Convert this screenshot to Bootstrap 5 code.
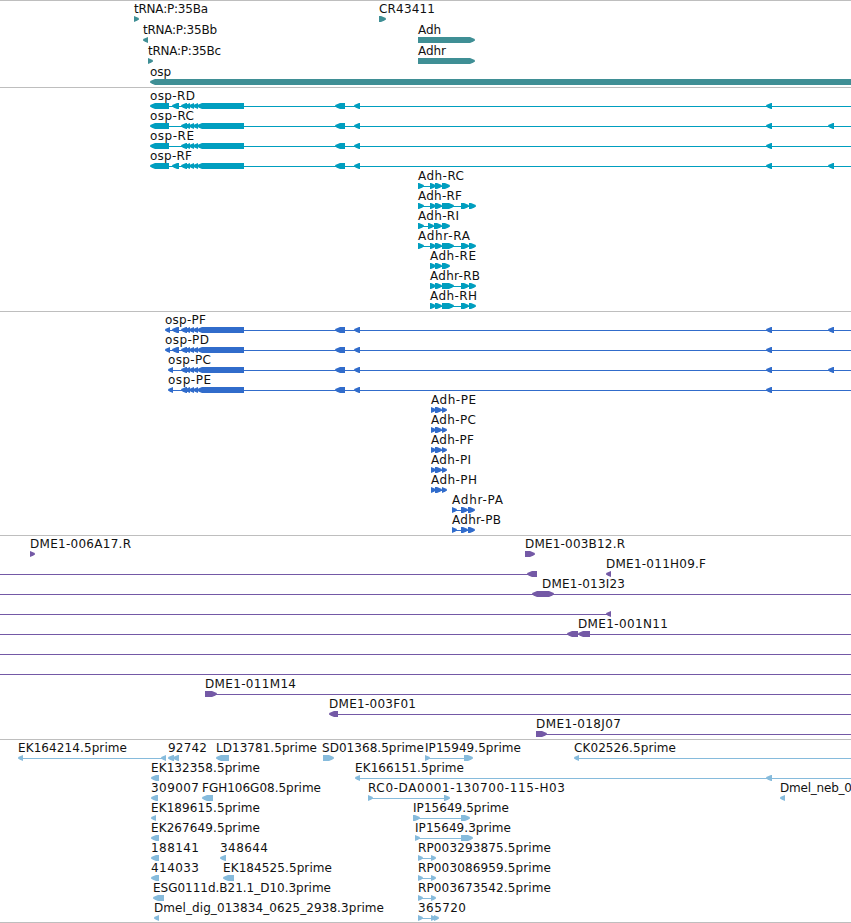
<!DOCTYPE html>
<html lang="en">
<head>
    <meta charset="UTF-8">
    <meta name="viewport" content="width=device-width, initial-scale=1">
    <title>Genome Tracks</title>
    <!-- Bootstrap CSS -->
    <link href="https://cdn.jsdelivr.net/npm/bootstrap@5.3.0/dist/css/bootstrap.min.css" rel="stylesheet">
    <style>
        .track { border-top: 1px solid #bebebe; }
        .track:last-child { border-bottom: 1px solid #bebebe; }
        .lane { width: 851px; height: 20px; overflow: visible; }
        .lane text { font: 12px "DejaVu Sans", sans-serif; fill: #111; }
        .track-gene { color: #3f8f95; padding-bottom: 2px; }
        .track-gene .lane { height: 21px; }
        .track-mrna { color: #009ebf; padding-bottom: 3px; }
        .track-cds { color: #316ccb; padding-bottom: 3px; }
        .track-bac { color: #7459a6; padding-bottom: 3px; }
        .track-est { color: #86bbdc; padding-bottom: 2px; }
    </style>
</head>
<body class="bg-white overflow-hidden">

    <main id="browser" class="d-flex flex-column"></main>

    <!-- Bootstrap JS -->
    <script src="https://cdn.jsdelivr.net/npm/bootstrap@5.3.0/dist/js/bootstrap.bundle.min.js"></script>

    <script>
        // labels: [text, start, end]
        // blocks: [start, end, direction], direction is L, R or B (both ends)
        // lines: [start, end]
        function lane(labels, blocks, lines) {
            return { labels: labels, blocks: blocks, lines: lines || [] };
        }

        const upstream = [[335, 345, 'L'], [354, 360, 'L'], [766, 772, 'L']];
        const far = [[828, 834, 'L']];
        const cluster = [[181, 187, 'L'], [185, 190, 'L'], [189, 194, 'L'], [193, 198, 'L'], [197, 244, 'L']].concat(upstream);
        const spur = [[172, 179, 'L']];
        const tail = [[442, 454, 'R'], [461, 469, 'R'], [469, 476, 'R']];
        const pair = [[430, 436, 'R'], [435, 442, 'R']];
        const first = [[418, 424, 'R']];
        const cds = [[431, 436, 'R'], [435, 442, 'R'], [442, 447, 'R']];
        const cdsR = [[452, 457, 'R'], [461, 468, 'R'], [468, 475, 'R']];
        const rp = [[418, 423, 'R'], [431, 436, 'R']];

        const tracks = [
            { name: 'gene', lanes: [
                lane([['tRNA:P:35Ba', 134, 208], ['CR43411', 379, 435]], [[134, 139, 'R'], [379, 386, 'R']]),
                lane([['tRNA:P:35Bb', 143, 217], ['Adh', 418, 441]], [[143, 148, 'L'], [418, 475, 'R']]),
                lane([['tRNA:P:35Bc', 148, 221], ['Adhr', 418, 446]], [[148, 153, 'R'], [418, 475, 'R']]),
                lane([['osp', 150, 171]], [[150, 860, 'L']])
            ] },
            { name: 'mrna', lanes: [
                lane([['osp-RD', 150, 195]], [[150, 169, 'L']].concat(spur, cluster), [[155, 851]]),
                lane([['osp-RC', 150, 194]], [[150, 169, 'L']].concat(cluster, far), [[155, 851]]),
                lane([['osp-RE', 150, 194]], [[150, 169, 'L']].concat(cluster), [[155, 851]]),
                lane([['osp-RF', 150, 192]], [[150, 169, 'L']].concat(spur, cluster, far), [[155, 851]]),
                lane([['Adh-RC', 418, 464]], first.concat(pair, [[442, 450, 'R']]), [[418, 447]]),
                lane([['Adh-RF', 418, 462]], first.concat(pair, tail), [[418, 473]]),
                lane([['Adh-RI', 418, 459]], first.concat([[428, 434, 'R'], [434, 442, 'R'], [442, 450, 'R']]), [[418, 447]]),
                lane([['Adhr-RA', 418, 470]], first.concat(pair, tail), [[418, 473]]),
                lane([['Adh-RE', 430, 476]], pair.concat([[442, 450, 'R']]), [[430, 447]]),
                lane([['Adhr-RB', 430, 480]], pair.concat(tail), [[430, 473]]),
                lane([['Adh-RH', 430, 477]], pair.concat(tail), [[430, 473]])
            ] },
            { name: 'cds', lanes: [
                lane([['osp-PF', 165, 206]], [[165, 170, 'L']].concat(spur, cluster, far), [[168, 851]]),
                lane([['osp-PD', 165, 209]], [[165, 170, 'L']].concat(spur, cluster), [[168, 851]]),
                lane([['osp-PC', 168, 211]], [[168, 173, 'L']].concat(cluster, far), [[170, 851]]),
                lane([['osp-PE', 168, 211]], [[168, 173, 'L']].concat(cluster), [[170, 851]]),
                lane([['Adh-PE', 431, 476]], cds, [[431, 445]]),
                lane([['Adh-PC', 431, 476]], cds, [[431, 445]]),
                lane([['Adh-PF', 431, 474]], cds, [[431, 445]]),
                lane([['Adh-PI', 431, 471]], cds, [[431, 445]]),
                lane([['Adh-PH', 431, 477]], cds, [[431, 445]]),
                lane([['Adhr-PA', 452, 503]], cdsR, [[452, 473]]),
                lane([['Adhr-PB', 452, 501]], cdsR, [[452, 473]])
            ] },
            { name: 'bac', lanes: [
                lane([['DME1-006A17.R', 30, 131], ['DME1-003B12.R', 525, 625]], [[30, 35, 'R'], [525, 535, 'R']]),
                lane([['DME1-011H09.F', 606, 706]], [[527, 537, 'L'], [606, 611, 'L']], [[0, 530]]),
                lane([['DME1-013I23', 542, 625]], [[532, 554, 'B']], [[0, 851]]),
                lane([], [[606, 611, 'L']], [[0, 608]]),
                lane([['DME1-001N11', 578, 668]], [[567, 578, 'L'], [578, 590, 'L']], [[0, 851]]),
                lane([], [], [[0, 851]]),
                lane([], [], [[0, 851]]),
                lane([['DME1-011M14', 205, 296]], [[205, 217, 'R']], [[214, 851]]),
                lane([['DME1-003F01', 329, 416]], [[329, 338, 'L']], [[335, 851]]),
                lane([['DME1-018J07', 536, 621]], [[536, 547, 'R']], [[543, 851]])
            ] },
            { name: 'est', lanes: [
                lane([['EK164214.5prime', 18, 127], ['92742', 168, 207], ['LD13781.5prime', 216, 317], ['SD01368.5prime', 322, 424], ['IP15949.5prime', 425, 521], ['CK02526.5prime', 574, 676]],
                    [[18, 23, 'L'], [161, 166, 'L'], [168, 174, 'L'], [173, 179, 'L'], [216, 229, 'L'], [323, 334, 'R'], [425, 430, 'R'], [464, 473, 'R'], [574, 579, 'L']],
                    [[20, 164], [427, 468], [577, 851]]),
                lane([['EK132358.5prime', 151, 260], ['EK166151.5prime', 355, 464]], [[151, 159, 'L'], [355, 360, 'L'], [766, 772, 'L']], [[358, 851]]),
                lane([['309007', 151, 199], ['FGH106G08.5prime', 202, 321], ['RC0-DA0001-130700-115-H03', 368, 565], ['Dmel_neb_0', 780, 852]],
                    [[151, 158, 'L'], [202, 213, 'L'], [368, 373, 'R'], [444, 450, 'R'], [780, 785, 'L']], [[370, 447]]),
                lane([['EK189615.5prime', 151, 260], ['IP15649.5prime', 413, 509]], [[151, 156, 'L'], [413, 420, 'R'], [461, 470, 'R']], [[415, 465]]),
                lane([['EK267649.5prime', 151, 260], ['IP15649.3prime', 415, 511]], [[151, 159, 'L'], [415, 420, 'R'], [461, 473, 'R']], [[417, 465]]),
                lane([['188141', 151, 199], ['348644', 220, 268], ['RP003293875.5prime', 418, 551]], [[151, 159, 'L'], [220, 226, 'L']].concat(rp), [[420, 434]]),
                lane([['414033', 151, 199], ['EK184525.5prime', 223, 332], ['RP003086959.5prime', 418, 551]], [[151, 159, 'L'], [223, 234, 'L']].concat(rp), [[420, 434]]),
                lane([['ESG0111d.B21.1_D10.3prime', 153, 331], ['RP003673542.5prime', 418, 551]], [[153, 164, 'L']].concat(rp), [[420, 434]]),
                lane([['Dmel_dig_013834_0625_2938.3prime', 154, 384], ['365720', 418, 466]], [[154, 159, 'L'], [418, 423, 'R'], [431, 436, 'R'], [434, 439, 'R']], [[420, 436]])
            ] }
        ];

        // block with a rounded-off arrow head, 5px long at most
        function arrow(block) {
            const [a, b, dir] = block;
            const head = Math.min(5, b - a);
            const left = dir !== 'R' ? `${a + head},15 ${a + 2},16.3 ${a},17.5 ${a},18.5 ${a + 2},19.7 ${a + head},21` : `${a},15 ${a},21`;
            const right = dir !== 'L' ? `${b - head},21 ${b - 2},19.7 ${b},18.5 ${b},17.5 ${b - 2},16.3 ${b - head},15` : `${b},21 ${b},15`;
            return `<polygon points="${left} ${right}"/>`;
        }

        function drawLane(data) {
            const lines = data.lines.map(([a, b]) => `<rect x="${a}" y="18" width="${b - a}" height="1"/>`).join('');
            const blocks = data.blocks.map(arrow).join('');
            const labels = data.labels.map(([text, a, b]) =>
                `<text x="${a}" y="12" textLength="${b - a}">${text}</text>`).join('');
            return `<svg class="lane d-block flex-shrink-0" fill="currentColor">${lines}${blocks}${labels}</svg>`;
        }

        document.getElementById('browser').innerHTML = tracks.map(track =>
            `<section class="track track-${track.name} d-flex flex-column">${track.lanes.map(drawLane).join('')}</section>`
        ).join('');
    </script>
</body>
</html>
